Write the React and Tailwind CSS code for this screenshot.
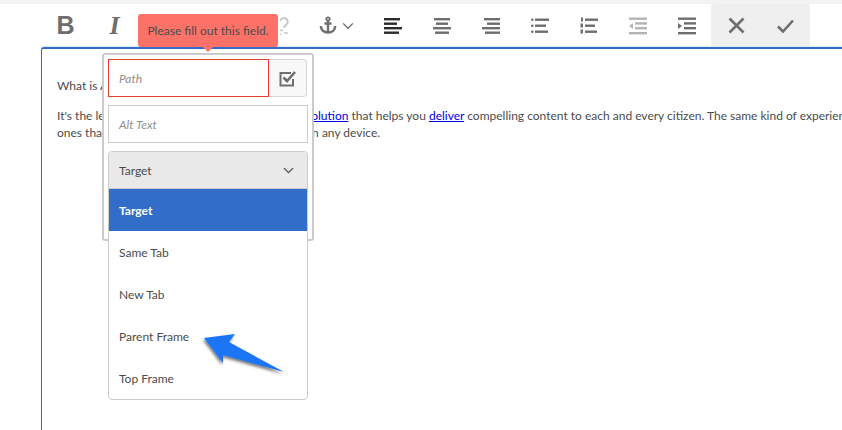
import React from 'react';
import { ChevronDown } from 'lucide-react';

const Bars = ({ rows, color = '#5c5c5c' }) => (
  <svg width="18" height="18" viewBox="0 0 18 18">
    {rows.map((r, i) => (
      <rect key={i} x={r[0]} y={r[1]} width={r[2]} height="2.4" fill={color} />
    ))}
  </svg>
);

const ToolBtn = ({ children, className = 'w-[49px]' }) => (
  <div className={`flex items-center justify-center shrink-0 h-full ${className}`}>{children}</div>
);

const Toolbar = () => (
  <div className="flex h-[43px] pl-[41px]">
    <ToolBtn>
      <span className="text-[25px] leading-none font-bold text-[#6e6e6e] font-['Liberation_Sans',sans-serif]">B</span>
    </ToolBtn>
    <ToolBtn>
      <span className="text-[26px] leading-none font-bold italic text-[#6e6e6e] font-['Liberation_Serif',serif]">I</span>
    </ToolBtn>
    <ToolBtn className="w-[119px]" />
    <ToolBtn>
      <svg width="18" height="20" viewBox="0 0 18 20" fill="none" stroke="#c8c8c8" strokeWidth="2">
        <path d="M6 5C7 2.5 9.5 1.5 11.5 2.5C14 3.5 14.5 6.5 12.5 8.5L9.5 11.5" />
        <path d="M6 14.5H9M10 17H14M7 17.5V19" strokeWidth="1.4" />
      </svg>
    </ToolBtn>
    <ToolBtn className="w-[61px] gap-[2px]">
      <svg width="18" height="19" viewBox="0 0 18 19" fill="none" stroke="#6e6e6e" strokeWidth="2.4">
        <circle cx="9" cy="3" r="1.7" strokeWidth="1.8" />
        <path d="M9 5V17M5.5 7.5H12.5" />
        <path d="M1.8 10C1.8 14 5 16.5 9 16.5C13 16.5 16.2 14 16.2 10" />
      </svg>
      <ChevronDown size={18} color="#6e6e6e" strokeWidth={1.6} />
    </ToolBtn>
    <ToolBtn>
      <Bars color="#2c2c2c" rows={[[0, 1, 16], [0, 5.5, 13], [0, 10, 18], [0, 14.5, 15]]} />
    </ToolBtn>
    <ToolBtn>
      <Bars color="#6e6e6e" rows={[[1, 1, 16], [3, 5.5, 12], [0, 10, 18], [2, 14.5, 14]]} />
    </ToolBtn>
    <ToolBtn>
      <Bars color="#6e6e6e" rows={[[2, 1, 16], [5, 5.5, 13], [0, 10, 18], [3, 14.5, 15]]} />
    </ToolBtn>
    <ToolBtn>
      <svg width="18" height="18" viewBox="0 0 18 18">
        <g fill="#6e6e6e">
          <rect x="4" y="1.5" width="14" height="2.4" />
          <rect x="4" y="7.5" width="11" height="2.4" />
          <rect x="4" y="13.5" width="13" height="2.4" />
          <circle cx="1.3" cy="2.7" r="1.3" />
          <circle cx="1.3" cy="8.7" r="1.3" />
          <circle cx="1.3" cy="14.7" r="1.3" />
        </g>
      </svg>
    </ToolBtn>
    <ToolBtn>
      <svg width="18" height="18" viewBox="0 0 18 18">
        <g fill="#6e6e6e">
          <rect x="5" y="1.5" width="13" height="2.4" />
          <rect x="5" y="7.5" width="10" height="2.4" />
          <rect x="5" y="13.5" width="12" height="2.4" />
          <rect x="1" y="0.5" width="2" height="4" />
          <rect x="0.5" y="6.5" width="2.5" height="4" />
          <rect x="0.5" y="12.5" width="2.5" height="4" />
        </g>
      </svg>
    </ToolBtn>
    <ToolBtn>
      <svg width="18" height="18" viewBox="0 0 18 18">
        <g fill="#b4b4b4">
          <rect x="0" y="0.5" width="18" height="2.4" />
          <rect x="6" y="5.2" width="12" height="2.4" />
          <rect x="6" y="10" width="12" height="2.4" />
          <rect x="0" y="15" width="18" height="2.4" />
          <path d="M4 6V12L0 9Z" />
        </g>
      </svg>
    </ToolBtn>
    <ToolBtn>
      <svg width="18" height="18" viewBox="0 0 18 18">
        <g fill="#6e6e6e">
          <rect x="0" y="0.5" width="18" height="2.4" />
          <rect x="6" y="5.2" width="12" height="2.4" />
          <rect x="6" y="10" width="12" height="2.4" />
          <rect x="0" y="15" width="18" height="2.4" />
          <path d="M0 6V12L4 9Z" />
        </g>
      </svg>
    </ToolBtn>
    <div className="flex h-full bg-[#efefef] rounded-t-[2px]">
      <ToolBtn className="w-[51px]">
        <svg width="17" height="17" viewBox="0 0 17 17" fill="none" stroke="#6e6e6e" strokeWidth="2.6">
          <path d="M1.5 1.5L15.5 15.5M15.5 1.5L1.5 15.5" />
        </svg>
      </ToolBtn>
      <ToolBtn className="w-[48px] pr-[1px]">
        <svg width="17" height="14" viewBox="0 0 17 14" fill="none" stroke="#6e6e6e" strokeWidth="2.6">
          <path d="M1 7.5L6 12.5L16 1.5" />
        </svg>
      </ToolBtn>
    </div>
  </div>
);

const Popover = () => (
  <div className="absolute left-[60px] top-[4px] w-[212px] h-[188px] bg-white border-2 border-[#cbcbcb] rounded-[3px] px-[4px] pt-[4px]">
    <div className="flex h-[38px]">
      <div className="w-[161px] border border-[#e2402f] flex items-center pl-[10px] text-[12px] italic text-[#8f8f8f]">Path</div>
      <div className="w-[38px] bg-[#f8f8f8] border border-l-0 border-[#d6d6d6] rounded-r-[4px] flex items-center justify-center">
        <svg width="18" height="17" viewBox="0 0 18 17" fill="none" stroke="#6e6e6e">
          <path d="M14 9V15.5H1.5V3H12" strokeWidth="2" />
          <path d="M4.5 7.5L8 11L16 2" strokeWidth="2.6" />
        </svg>
      </div>
    </div>
    <div className="mt-[8px] h-[38px] w-[200px] border border-[#cbcbcb] flex items-center pl-[10px] text-[12px] italic text-[#8f8f8f]">Alt Text</div>
    <div className="mt-[8px] w-[200px] bg-white border border-[#cbcbcb] rounded-[4px] text-[12px] text-[#4b4b4b]">
      <div className="h-[37px] bg-[#e9e9e9] border-b border-[#cbcbcb] rounded-t-[4px] flex items-center justify-between pl-[10px] pr-[10px]">
        <span>Target</span>
        <ChevronDown size={17} color="#4b4b4b" strokeWidth={1.8} />
      </div>
      <div className="h-[42px] bg-[#326ec8] text-white font-bold flex items-center pl-[10px]">Target</div>
      <div className="h-[42px] flex items-center pl-[10px]">Same Tab</div>
      <div className="h-[42px] flex items-center pl-[10px]">New Tab</div>
      <div className="h-[42px] flex items-center pl-[10px]">Parent Frame</div>
      <div className="h-[42px] flex items-center pl-[10px]">Top Frame</div>
    </div>
  </div>
);

export default function App() {
  return (
    <div className="relative w-[842px] h-[430px] overflow-hidden bg-white font-['Lato',sans-serif]">
      <div className="h-[4px] bg-[#f3f3f3]" />
      <Toolbar />

      <div className="relative h-[400px] ml-[41px] border-l border-t-2 border-[#326ec8] rounded-tl-[3px] pl-[15px] pt-[28px] text-[12px] leading-[17px] text-[#4b4b4b] whitespace-nowrap shadow-[0_-1px_1px_#dbe7f7]">
        <p>What is AEM?</p>
        <p className="mt-[13px]">
          It's the leading digital experience management{'\u00a0 '}
          <a className="text-[#0000ee] underline">solution</a> that helps you{' '}
          <a className="text-[#0000ee] underline">deliver</a> compelling content to each and every citizen. The same kind of experiences
        </p>
        <p>ones that residents have grown to expect, now on any device.</p>
        <Popover />
      </div>

      {/* validation tooltip */}
      <div className="absolute left-[138px] top-[14px] w-[140px] h-[33px] bg-[#fc7268] rounded-[3px] flex items-center justify-center text-[12px] text-[#4b4b4b]">
        Please fill out this field.
        <div className="absolute left-[65px] bottom-[-5px] w-0 h-0 border-x-[5px] border-x-transparent border-t-[5px] border-t-[#fc7268]" />
      </div>

      {/* annotation arrow */}
      <svg className="absolute left-[198px] top-[328px]" width="96" height="56" viewBox="198 328 96 56">
        <defs>
          <filter id="arrowShadow" x="-20%" y="-20%" width="140%" height="150%">
            <feDropShadow dx="-1" dy="2" stdDeviation="1.5" floodColor="#000" floodOpacity="0.55" />
          </filter>
        </defs>
        <path d="M204 338L235 334L229 342L284 372L223 355L223 363Z" fill="#1a75f5" filter="url(#arrowShadow)" />
      </svg>
    </div>
  );
}
